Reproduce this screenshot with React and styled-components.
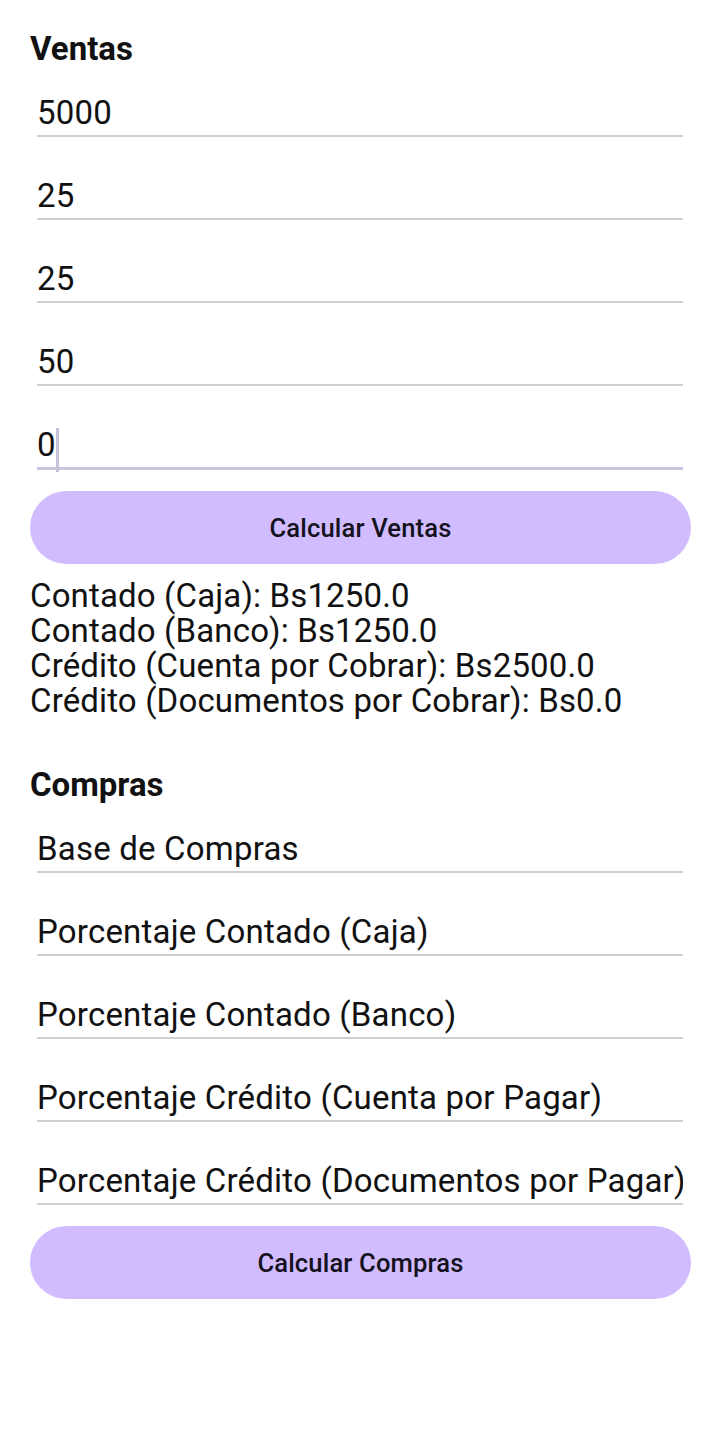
import React from "react";
import styled, { createGlobalStyle } from "styled-components";

const GlobalStyle = createGlobalStyle`
  html, body {
    margin: 0;
    padding: 0;
    background: #fff;
  }
  body {
    font-family: Roboto, "Noto Sans", sans-serif;
    color: #1c1b1f;
  }
`;

const Screen = styled.div`
  width: 719px;
  min-height: 1431px;
  box-sizing: border-box;
  padding: 30px 29px 0 30px;
  display: flex;
  flex-direction: column;
`;

const Heading = styled.h2`
  margin: ${(p) => (p.spaced ? "48px" : "0")} 0 0;
  font-size: 33px;
  line-height: 38px;
  font-weight: 700;
  color: #111;
`;

const Field = styled.div`
  position: relative;
  margin: ${(p) => (p.first ? "0" : "14px")} 7px 0 7px;
`;

const Input = styled.input`
  display: block;
  width: 100%;
  box-sizing: border-box;
  height: ${(p) => (p.focused ? "70px" : "69px")};
  padding: 24px 0 3px 0;
  border: none;
  border-bottom: ${(p) => (p.focused ? "3px solid #cac4dc" : "2px solid #cfcfcf")};
  background: transparent;
  font-family: Roboto, sans-serif;
  font-size: 33px;
  line-height: 40px;
  letter-spacing: 0.2px;
  color: #111;
  outline: none;
  &::placeholder {
    color: #111;
    opacity: 1;
  }
`;

const Caret = styled.span`
  position: absolute;
  left: 19px;
  top: 28px;
  width: 3px;
  height: 44px;
  background: #c8c0da;
`;

const Button = styled.button`
  margin-top: ${(p) => p.top || 21}px;
  width: 661px;
  height: 73px;
  border: none;
  border-radius: 37px;
  background: #d0bcfe;
  color: #15121d;
  font-family: Roboto, sans-serif;
  font-size: 25.6px;
  font-weight: 500;
  letter-spacing: 0.15px;
  cursor: pointer;
`;

const Results = styled.div`
  margin-top: 14px;
  display: flex;
  flex-direction: column;
`;

const ResultLine = styled.div`
  font-size: 33px;
  line-height: 35px;
  letter-spacing: 0.15px;
  color: #111;
  white-space: nowrap;
`;

const ventas = ["5000", "25", "25", "50"];
const resultados = [
  "Contado (Caja): Bs1250.0",
  "Contado (Banco): Bs1250.0",
  "Crédito (Cuenta por Cobrar): Bs2500.0",
  "Crédito (Documentos por Cobrar): Bs0.0",
];
const compras = [
  "Base de Compras",
  "Porcentaje Contado (Caja)",
  "Porcentaje Contado (Banco)",
  "Porcentaje Crédito (Cuenta por Pagar)",
  "Porcentaje Crédito (Documentos por Pagar)",
];

export default function App() {
  return (
    <>
      <GlobalStyle />
      <Screen>
        <Heading>Ventas</Heading>
        {ventas.map((v, i) => (
          <Field key={i} first={i === 0}>
            <Input defaultValue={v} />
          </Field>
        ))}
        <Field>
          <Input defaultValue="0" focused />
          <Caret />
        </Field>
        <Button>Calcular Ventas</Button>
        <Results>
          {resultados.map((r) => (
            <ResultLine key={r}>{r}</ResultLine>
          ))}
        </Results>
        <Heading spaced>Compras</Heading>
        {compras.map((c, i) => (
          <Field key={c} first={i === 0}>
            <Input placeholder={c} />
          </Field>
        ))}
        <Button>Calcular Compras</Button>
      </Screen>
    </>
  );
}
